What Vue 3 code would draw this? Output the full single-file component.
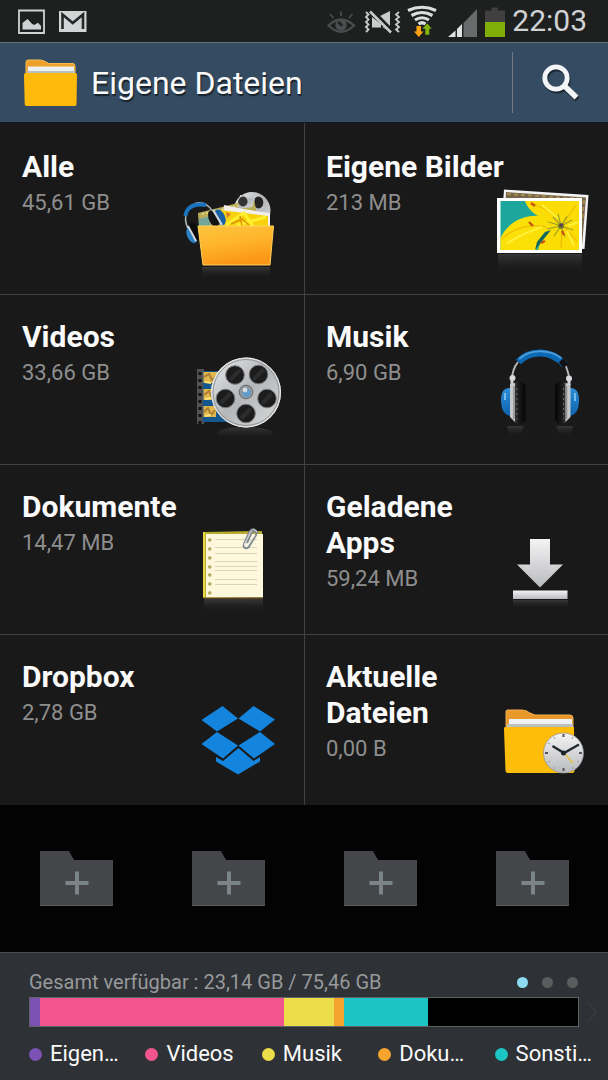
<script setup>
const tiles = [
  { id: 'all', title: 'Alle', size: '45,61 GB', box: '174 174 130 120' },
  { id: 'pictures', title: 'Eigene Bilder', size: '213 MB', box: '478 174 130 120' },
  { id: 'videos', title: 'Videos', size: '33,66 GB', box: '174 344 130 120' },
  { id: 'music', title: 'Musik', size: '6,90 GB', box: '478 344 130 120' },
  { id: 'docs', title: 'Dokumente', size: '14,47 MB', box: '174 514 130 120' },
  { id: 'apps', title: 'Geladene Apps', size: '59,24 MB', box: '478 514 130 120' },
  { id: 'dropbox', title: 'Dropbox', size: '2,78 GB', box: '174 685 130 120' },
  { id: 'recent', title: 'Aktuelle Dateien', size: '0,00 B', box: '478 685 130 120' },
]

const usage = [
  { label: 'Eigen…', color: '#7b51b3', share: 10 },
  { label: 'Videos', color: '#f2558b', share: 244 },
  { label: 'Musik', color: '#ecdd4a', share: 49 },
  { label: 'Doku…', color: '#f5a52d', share: 10 },
  { label: 'Sonsti…', color: '#1cc4c4', share: 84 },
]
const free = 150

const reelHoles = [[235, 375], [258.5, 374.5], [225.5, 398.5], [267, 398.5], [246, 413.5]]
const ruleLines = [539, 547, 553, 561, 566, 570, 579, 584]
const punchHoles = [540, 549, 558, 567, 575, 584, 593]
</script>

<template>
  <div class="screen">
    <div class="status">
      <div class="status-group">
        <svg width="41" height="42" viewBox="12 0 41 42" aria-hidden="true">
          <path d="M19 10.500H44V33H19Z" fill="#1e201f" stroke="#cfd2d4" stroke-width="1.800" />
          <path d="M22.500 29.500V23L27.500 19L32 23.800L34.200 25L38 22.800L41 26V29.500Z" fill="#cfd2d4" />
        </svg>
        <svg width="40" height="42" viewBox="53 0 40 42" aria-hidden="true">
          <path d="M59 11H86.500V32H59Z" fill="#d2d4d6" />
          <path d="M62.500 29V14.500L72.700 23L83 14.500V29" fill="none" stroke="#252828" stroke-width="2.600" />
        </svg>
      </div>
      <div class="status-group">
        <svg width="36" height="42" viewBox="325 0 36 42" aria-hidden="true" fill="none" stroke="#4b4c4e">
          <path d="M328.500 25.500Q341 13.500 354 25.500Q341 38 328.500 25.500Z" stroke-width="2.200" />
          <circle cx="341" cy="25" r="5.800" fill="#4b4c4e" stroke="none" />
          <path d="M341.500 25L338.800 22.500" stroke="#1e201f" stroke-width="2.400" stroke-linecap="round" />
          <path d="M341 11.500V16M330 14L333.500 18M352.500 14L349 18" stroke-width="1.800" />
        </svg>
        <svg width="42" height="42" viewBox="361 0 42 42" aria-hidden="true" fill="none" stroke="#c9cbcd">
          <path d="M366 12L368.500 14.500L366 17L368.500 19.500L366 22L368.500 24.500L366 27L368.500 29.500L366 32" stroke-width="1.800" />
          <path d="M399 12L396 14.500L399 17L396 19.500L399 22L396 24.500L399 27L396 29.500L399 32" stroke-width="1.800" />
          <path d="M372 17L381 24V27.500H372ZM380 16L390 11V27ZM382 27L388 28L391 32Z" fill="#c9cbcd" stroke="none" />
          <path d="M372.500 12L392.500 32" stroke="#1e201f" stroke-width="5" />
          <path d="M370 11.500L391 32.500" stroke-width="2.500" />
        </svg>
        <svg width="40" height="42" viewBox="403 0 40 42" aria-hidden="true" fill="none">
          <path d="M408 10.500Q422 4 436 10.500M411.500 15.500Q422 9.500 432.500 15.500M415 20Q422 15.500 429 20M418.500 24Q422 21.500 425.500 24" stroke="#dcdee0" stroke-width="3.200" />
          <path d="M416.500 26H421V31.500H423.500L418.800 37L414 31.500H416.500Z" fill="#ffa313" />
          <path d="M425 35V29H422L427.200 23L432 29H429.500V35Z" fill="#84b40b" stroke="#1e201f" stroke-width="0.500" />
        </svg>
        <svg width="38" height="42" viewBox="443 0 38 42" aria-hidden="true">
          <path d="M463.500 23L477 9V37H463.500Z" fill="#686a6c" />
          <path d="M448 37L455.500 30.500V37ZM457 29L462 24V37H457Z" fill="#dfe1e3" />
        </svg>
        <svg width="31" height="42" viewBox="481 0 31 42" aria-hidden="true">
          <path d="M485 10.500H491.500V7.500H498V10.500H505V22H485Z" fill="#3f403f" />
          <path d="M485 22H505V37H485Z" fill="#80ad08" />
        </svg>
        <time class="clock">22:03</time>
      </div>
    </div>

    <header class="bar">
      <svg class="bar-icon" width="54" height="50" viewBox="24 58 54 50" aria-hidden="true">
        <path d="M26 76V62Q26 60 28 60H40Q43 60 46 62L49 63.500H73Q75 63.500 75 66V76Z" fill="#eea128" stroke="#f7bd55" stroke-width="1" />
        <path d="M28 66.500H74V74H28Z" fill="#eef1f3" />
        <path d="M27 71H75V74H27Z" fill="#b9bfc2" />
        <path d="M25.500 73H75.500Q77 73 77 75L76.500 104Q76.500 106 75 106H26.500Q24.700 106 24.700 104L24 75Q24 73 25.500 73Z" fill="#ffba0b" />
      </svg>
      <h1 class="bar-title">Eigene Dateien</h1>
      <button class="search" type="button" aria-label="Suchen">
        <svg width="42" height="44" viewBox="540 61 42 44" fill="none" aria-hidden="true">
          <g transform="translate(1 2)" stroke="#1b2732"><circle cx="556" cy="78" r="11.200" stroke-width="4.800" /><path d="M564.500 86L576.500 97.500" stroke-width="5.500" /></g>
          <g stroke="#f4f5f6"><circle cx="556" cy="78" r="11.200" stroke-width="4.800" /><path d="M564.500 86L576.500 97.500" stroke-width="5.500" /></g>
        </svg>
      </button>
    </header>

    <svg class="paints" width="0" height="0" aria-hidden="true">
      <defs>
        <linearGradient id="orange" x1="0" y1="0" x2="0.300" y2="1"><stop offset="0" stop-color="#fdc43e" /><stop offset="0.500" stop-color="#ffb52c" /><stop offset="1" stop-color="#fb9717" /></linearGradient>
        <linearGradient id="silver" x1="0" y1="0" x2="0" y2="1"><stop offset="0" stop-color="#f4f4f5" /><stop offset="1" stop-color="#b9babd" /></linearGradient>
        <linearGradient id="metal" x1="0" y1="0" x2="1" y2="1"><stop offset="0" stop-color="#e9e9ea" /><stop offset="0.500" stop-color="#b4b6b8" /><stop offset="1" stop-color="#dcdddd" /></linearGradient>
        <linearGradient id="mirror" x1="0" y1="0" x2="0" y2="1"><stop offset="0" stop-color="#444" stop-opacity="0.700" /><stop offset="1" stop-color="#222" stop-opacity="0" /></linearGradient>
        <linearGradient id="blue" x1="0" y1="0" x2="0" y2="1"><stop offset="0" stop-color="#2e8fd8" /><stop offset="1" stop-color="#0d62ae" /></linearGradient>
        <linearGradient id="pad" x1="0" y1="0" x2="1" y2="0"><stop offset="0" stop-color="#4a4a4b" /><stop offset="0.400" stop-color="#1c1c1c" /><stop offset="1" stop-color="#050505" /></linearGradient>
      </defs>
    </svg>

    <nav class="tiles" aria-label="Kategorien">
      <button v-for="t in tiles" :key="t.id" class="tile" type="button">
        <span class="tile-text">
          <span class="tile-title">{{ t.title }}</span>
          <span class="tile-size">{{ t.size }}</span>
        </span>
        <svg class="tile-art" width="130" height="120" :viewBox="t.box" fill="none" aria-hidden="true">
          <g v-if="t.id === 'all'">
            <path d="M202 267H270L269 278H203Z" fill="url(#mirror)" />
            <circle cx="252" cy="210.500" r="18.500" fill="url(#metal)" />
            <ellipse cx="242.500" cy="203" rx="4.500" ry="5" fill="#333" />
            <ellipse cx="258.500" cy="202.500" rx="4.800" ry="6" fill="#242424" />
            <path d="M198 213L254 199L259 227H199Z" fill="#bcae58" />
            <path d="M240 195L255 199L252 207L238 209Z" fill="url(#metal)" />
            <ellipse cx="243" cy="201.500" rx="4.500" ry="5" fill="#333" />
            <path d="M202 214L238 206" stroke="#ded391" stroke-width="2" stroke-dasharray="2 2" />
            <path d="M199 219L210 216V227H199Z" fill="#72a69a" />
            <path d="M224 205Q245 210 270 213V227H222Z" fill="#f0efeb" />
            <path d="M221 210L268 216V227H218Z" fill="#f8d20c" />
            <path d="M226 225L244 213L253 226M237 225L266 217" stroke="#fff02e" stroke-width="3" />
            <path d="M231 224L242 219L249 225M240 216L242 226" stroke="#dc9508" stroke-width="1.500" />
            <path d="M226 212L231 214L227 218Z" fill="#d67730" />
            <path d="M188 229C182 215 188 205 197 203C204 202 210 206 213 212" stroke="#abb4b9" stroke-width="1.600" />
            <path d="M185.500 216C186 208 193 203 206 205" stroke="#1973bd" stroke-width="4" />
            <ellipse cx="192" cy="235" rx="5" ry="8.500" transform="rotate(-24 192 235)" fill="#2a80c3" />
            <ellipse cx="195" cy="231.500" rx="4.500" ry="9.500" transform="rotate(-24 195 231.500)" fill="#0c0c0c" />
            <path d="M188 226L196 241" stroke="#d4d7d9" stroke-width="2" />
            <ellipse cx="220" cy="217.500" rx="5" ry="8.500" transform="rotate(-24 220 217.500)" fill="#1a61a5" />
            <ellipse cx="213.500" cy="219" rx="4.500" ry="9" transform="rotate(-24 213.500 219)" fill="#141414" />
            <path d="M213 210L222 225" stroke="#d4d7d9" stroke-width="2.200" />
            <path d="M198 226H273.500L270 265H203Z" fill="url(#orange)" stroke="#ffd35a" stroke-width="1" />
          </g>

          <g v-else-if="t.id === 'pictures'">
            <path d="M498 254H582V272H498Z" fill="url(#mirror)" />
            <path d="M504 189.500L588.500 195L584.500 249L500 244Z" fill="#f4f4f4" />
            <path d="M506 192L586 197.500L582 246L504 240Z" fill="#75654d" />
            <path d="M507 194L584 199M584 200L582 222" stroke="#a58c4b" stroke-width="2" stroke-dasharray="4 3" />
            <path d="M497 198H582V253H497Z" fill="#fff" />
            <path d="M500.500 201H579V250H500.500Z" fill="#1da79c" />
            <path d="M500.500 238C508 222 524 214 541 216C548 219 551 226 545 233C540 238 538 242 536 250H500.500Z" fill="#fae007" />
            <path d="M525 201C529 213 538 215 548 222C546 232 541 238 538 250H579V201Z" fill="#fbdc05" />
            <path d="M535 250L551 230L545 232L537 242Z" fill="#12665b" />
            <path d="M502 239C513 228 530 223 546 227M531 203C541 207 552 211 561 223M563 224L576 205M563 226L577 241M562 229L561 248" stroke="#f0bd06" stroke-width="1.300" />
            <path d="M506 244Q523 233 542 227M542 205L560 220M568 226L578 222M567 231L574 246" stroke="#fff03a" stroke-width="2" />
            <path d="M561 226L549 222M561 226L553 217M561 226L558 214M561 226L567 216M561 226L572 220M561 226L573 230M561 226L565 237M561 226L554 236M561 226L547 229" stroke="#9aa02a" stroke-width="1.200" />
            <circle cx="561" cy="226" r="2.800" fill="#61722d" />
            <path d="M559 225L563 223L562 227Z" fill="#69335e" />
            <path d="M529 222L533 226M531 203L535 206M562 231L564 235M541 243L545 241" stroke="#c75416" stroke-width="2.400" />
          </g>

          <g v-else-if="t.id === 'videos'">
            <ellipse cx="245" cy="433" rx="28" ry="6" fill="url(#mirror)" />
            <path d="M197 369H204V424H197Z" fill="#525254" />
            <path d="M200 372V424" stroke="#111" stroke-width="3" stroke-dasharray="3 4" />
            <path d="M203 371H230V422H203Z" fill="#14578e" />
            <path d="M203.500 372H220V383H203.500ZM203.500 389H218V400H203.500ZM203.500 406H216V417H203.500Z" fill="#e2b64a" />
            <path d="M204 377L209 374L212 380L217 376M204 395L209 391L212 398L216 393M204 412L208 408L211 415L215 410" stroke="#a87c35" stroke-width="1.800" />
            <path d="M205 382L211 383M205 399L211 398M205 416L211 415" stroke="#fae478" stroke-width="2" />
            <circle cx="246" cy="392.500" r="35" fill="url(#metal)" />
            <circle cx="246" cy="392.500" r="33" stroke="#909396" stroke-width="1" />
            <circle cx="246" cy="392.500" r="34.500" stroke="#e8e8e8" stroke-width="1" />
            <g v-for="(h, i) in reelHoles" :key="i"><circle :cx="h[0]" :cy="h[1]" r="9.300" fill="#1c1c1d" stroke="#777a7d" stroke-width="1" /><path :d="`M${h[0] - 5} ${h[1] + 5}L${h[0] + 5} ${h[1] - 5}`" stroke="#2b2c2d" stroke-width="4" /></g>
            <circle cx="246" cy="392" r="6.800" fill="#8f999f" stroke="#626b70" />
            <circle cx="246.500" cy="393" r="4" fill="#5d9bca" />
            <circle cx="245" cy="390" r="2.400" fill="#d5dde1" />
          </g>

          <g v-else-if="t.id === 'music'">
            <path d="M507 426H524L520 436H510ZM556 426H573L570 436H560Z" fill="url(#mirror)" />
            <path d="M512 380C512 374 514 367 518 362M569.500 380C569 374 567 369 565 364" stroke="#b4b8bb" stroke-width="2" />
            <path d="M518.500 362C529 350 551 349 565 365" stroke="#0d68b3" stroke-width="7" />
            <path d="M519 359C530 349 549 349 561 358" stroke="#4a9edb" stroke-width="2" />
            <path d="M561 360.500L566 366" stroke="#101010" stroke-width="6" />
            <path d="M511 388Q501 387 501 400Q501 415 511 416Z" fill="url(#blue)" />
            <path d="M569 388Q579 387 579 400Q579 415 569 416Z" fill="url(#blue)" />
            <path d="M505 393V400M575 393V401" stroke="#75bced" stroke-width="2" />
            <rect x="513" y="381" width="12.500" height="43" rx="6" fill="url(#pad)" />
            <rect x="555" y="381" width="12.500" height="43" rx="6" transform="rotate(180 561.250 402.500)" fill="url(#pad)" />
            <path d="M517 388V419M563.500 388V419" stroke="#6a6a6b" stroke-width="1" stroke-dasharray="2 3" />
            <path d="M510 384L515 383V422L510 417ZM565.500 383L570.500 384V417L565.500 422Z" fill="#c5c9cb" />
            <path d="M514 386V419M566.500 386V419" stroke="#8d9194" stroke-width="1.500" />
            <path d="M512 378V385M569 378V385" stroke="#cfd2d4" stroke-width="3" />
            <circle cx="512.500" cy="378" r="3" fill="#d7dadd" /><circle cx="569" cy="378.500" r="3" fill="#d7dadd" />
          </g>

          <g v-else-if="t.id === 'docs'">
            <path d="M204 599H263V612H204Z" fill="url(#mirror)" />
            <path d="M204 532L262 531L263 597L203 598Z" fill="#b6ad2e" />
            <path d="M206 534H263V597.500H206Z" fill="#fdf8dc" />
            <path d="M204 532V597" stroke="#e7d846" stroke-width="2" />
            <path d="M204 598H263" stroke="#906b29" stroke-width="1" />
            <path v-for="y in ruleLines" :key="y" :d="`M215 ${y}.5H257`" stroke="#dbd4b9" stroke-width="1" />
            <circle v-for="y in punchHoles" :key="`p${y}`" cx="209.800" :cy="y" r="1.400" fill="#c6bd45" stroke="#938d65" stroke-width="0.600" />
            <path d="M258 533C254 527 250 529 248 535L244 544C242 549 248 550 250 545L256 535C258 530 253 531 251 534L247 543" stroke="#858b91" stroke-width="2" />
            <path d="M257 532C254 528 251 530 249 535L244.500 544C244 547 247 548 249 544L255 535" stroke="#dde1e5" stroke-width="1" />
          </g>

          <g v-else-if="t.id === 'apps'">
            <path d="M530 539H550V564.500H563L540 587.500L517 564.500H530Z" fill="url(#silver)" />
            <path d="M513 590.500H567.500V599H513Z" fill="url(#silver)" />
            <path d="M513 600H568V608H513Z" fill="url(#mirror)" />
          </g>

          <g v-else-if="t.id === 'dropbox'" fill="#1485de">
            <path d="M222.500 706L238 718.500L217 731.500L201.500 720Z" />
            <path d="M253.500 706L275 719.500L260 731.500L238.500 718.500Z" />
            <path d="M217 732L238 745.500L223 758.500L201.500 744Z" />
            <path d="M260 732L275 744L254 758.500L238.500 745.500Z" />
            <path d="M238.500 748L253.500 761L260 757V761.500L238 774.500L216 761.500V757L223 761Z" />
          </g>

          <g v-else>
            <path d="M506 730V711Q506 710 508 710H522Q526 710 530 713L535 715H570Q573 715 573 718V730Z" fill="#e9982b" stroke="#f2ae4c" />
            <path d="M509 719H572V728H509Z" fill="#f0f1f3" />
            <path d="M507 724H573V729H507Z" fill="#bdc0c3" />
            <path d="M505 727H574L574.500 771Q574.500 773 572 773H508Q505.500 773 505.500 771L504 729Q504 727 505 727Z" fill="#ffbd0b" />
            <circle cx="563.500" cy="753" r="20" fill="url(#silver)" stroke="#8d9093" stroke-width="0.700" />
            <path d="M563.500 734V737M563.500 768V771M545 753H548M579 753H582" stroke="#52575a" stroke-width="2" />
            <path d="M554 737L555 739M573 737L572 739M548 743L550 744M579 762L577 761M548 762L550 761M554 769L555 767M573 769L572 767" stroke="#969a9d" />
            <path d="M552.500 746L564 753L579 744.500" stroke="#222b32" stroke-width="2.400" />
            <path d="M564 753L573 763" stroke="#e6c13a" stroke-width="1.500" />
            <circle cx="563.500" cy="753" r="2.500" fill="#1d252b" />
          </g>
        </svg>
      </button>
    </nav>

    <div class="shortcuts">
      <button v-for="n in 4" :key="n" class="add" type="button" aria-label="Ordner hinzufügen">
        <svg width="73" height="55" viewBox="0 0 73 55" aria-hidden="true">
          <path d="M0 0H29L34 9H73V55H0Z" fill="#454649" />
          <path d="M0 54.500H73" stroke="#5a5c5f" />
          <path d="M25.500 32H48.500M37 20.500V43.500" stroke="#7b8489" stroke-width="4" />
        </svg>
      </button>
    </div>

    <footer class="storage">
      <div class="summary">
        <span class="total">Gesamt verfügbar : 23,14 GB / 75,46 GB</span>
        <span class="pages"><i class="page current"></i><i class="page"></i><i class="page"></i></span>
      </div>
      <div class="meter-row">
        <div class="meter" role="img" aria-label="Speicherbelegung">
          <span v-for="u in usage" :key="u.label" class="part" :style="{ flexGrow: u.share, background: u.color }"></span>
          <span class="part" :style="{ flexGrow: free }"></span>
        </div>
        <svg class="next" width="13" height="22" viewBox="0 0 13 22" fill="none" aria-hidden="true">
          <path d="M1 1L9 11L1 21" stroke="#3a3c3f" stroke-width="1.500" />
        </svg>
      </div>
      <ul class="legend">
        <li v-for="u in usage" :key="u.label"><i class="swatch" :style="{ background: u.color }"></i>{{ u.label }}</li>
      </ul>
    </footer>
  </div>
</template>

<style>
body {
  background: #2e3135;
}
</style>

<style scoped>
.screen {
  display: flex;
  flex-direction: column;
  min-height: 100vh;
  background: #2e3135;
  color: #fafafa;
  font-family: Roboto, "Liberation Sans", sans-serif;
}
button {
  margin: 0;
  border: 0;
  padding: 0;
  background: none;
  color: inherit;
  font: inherit;
  text-align: left;
  cursor: pointer;
}
svg {
  display: block;
  flex: none;
}
.paints {
  position: absolute;
}
.status {
  display: flex;
  justify-content: space-between;
  height: 42px;
  padding: 0 21px 0 12px;
  background: #1e201f;
}
.status-group {
  display: flex;
  align-items: center;
}
.clock {
  color: #d0d2d4;
  font-size: 30px;
  line-height: 44px;
}
.bar {
  display: flex;
  align-items: center;
  height: 79px;
  padding-left: 24px;
  border-top: 1px solid #65727f;
  border-bottom: 1px solid #10161c;
  background: #344b61;
}
.bar-title {
  flex: 1;
  margin: 0 0 0 13px;
  font-size: 32px;
  font-weight: 400;
  line-height: 40px;
  text-shadow: 1px 2px 1px #17222d;
}
.search {
  display: flex;
  align-items: center;
  justify-content: center;
  width: 96px;
  height: 61px;
  box-sizing: border-box;
  border-left: 1px solid #707a83;
}
.tiles {
  display: grid;
  grid-template-columns: 1fr 1fr;
  background: #191919;
}
.tile {
  display: grid;
  min-height: 170px;
  box-sizing: border-box;
  border-bottom: 1px solid #414141;
}
.tile:nth-child(-n + 2) {
  padding-top: 2px;
  min-height: 172px;
}
.tile:nth-child(even) {
  border-left: 1px solid #414141;
}
.tile:nth-last-child(-n + 2) {
  border-bottom: 0;
}
.tile-text,
.tile-art {
  grid-area: 1 / 1;
}
.tile-text {
  align-self: start;
  display: flex;
  flex-direction: column;
  max-width: 190px;
  padding: 24px 0 0 22px;
}
.tile:nth-child(even) .tile-text {
  padding-left: 21px;
}
.tile-title {
  font-size: 30px;
  font-weight: 700;
  line-height: 36px;
}
.tile-size {
  color: #8e8e8e;
  font-size: 22px;
  line-height: 36px;
}
.tile-art {
  align-self: end;
  justify-self: end;
}
.shortcuts {
  display: grid;
  grid-template-columns: repeat(4, 1fr);
  height: 147px;
  background: #030303;
}
.add {
  display: flex;
  align-items: center;
  justify-content: center;
}
.storage {
  border-top: 1px solid #4a4d50;
  padding: 14px 0 10px 29px;
}
.summary {
  display: flex;
  align-items: center;
  justify-content: space-between;
  padding-right: 30px;
}
.total {
  color: #97999b;
  font-size: 20px;
  line-height: 30px;
}
.pages {
  display: flex;
  gap: 14px;
}
.page {
  width: 11px;
  height: 11px;
  border-radius: 50%;
  background: #5b5c5e;
}
.page.current {
  background: #8fdcf2;
}
.meter-row {
  display: flex;
  align-items: center;
  gap: 8px;
  padding-right: 8px;
}
.meter {
  flex: 1;
  display: flex;
  height: 28px;
  border: 1px solid #606366;
  background: #000;
}
.part {
  flex: 0 0 0;
}
.legend {
  display: grid;
  grid-template-columns: repeat(5, 1fr);
  gap: 18px;
  margin: 12px 0 0;
  padding: 0 15px 0 0;
  list-style: none;
  font-size: 22px;
  line-height: 30px;
  white-space: nowrap;
}
.legend li {
  display: flex;
  align-items: center;
  gap: 8px;
  min-width: 0;
}
.swatch {
  flex: none;
  width: 13px;
  height: 13px;
  border-radius: 50%;
}
</style>
